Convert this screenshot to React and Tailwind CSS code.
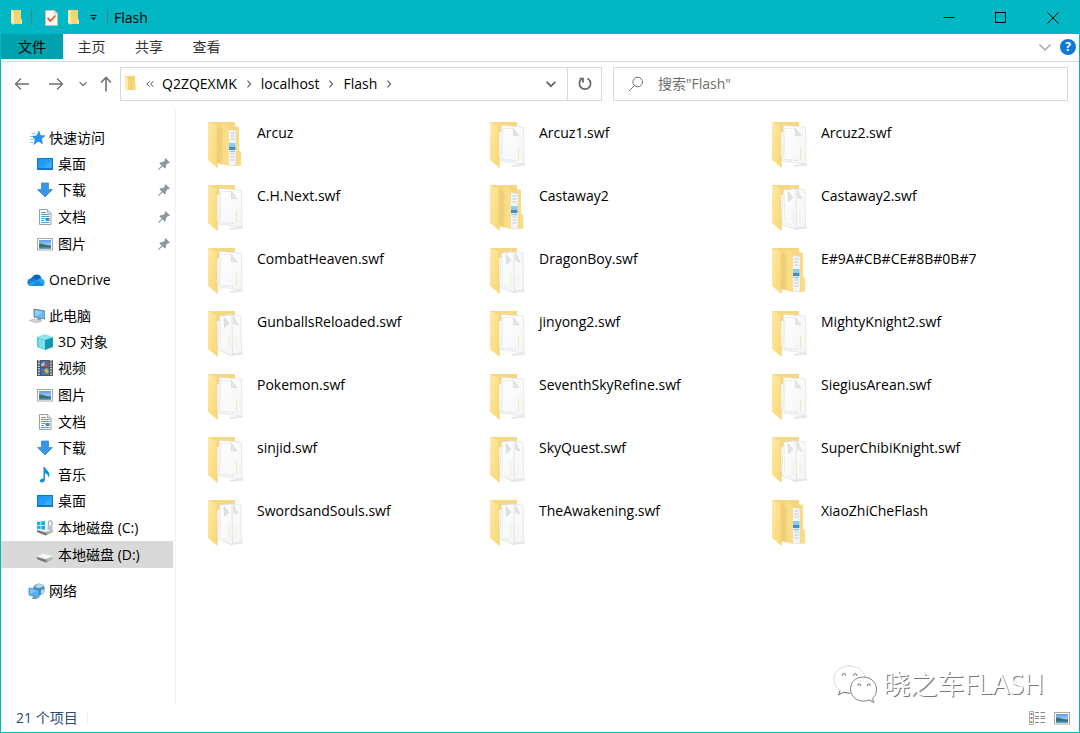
import React from "react";

const SPREADS = {
  folders: ["Arcuz", "Castaway2", "E#9A#CB#CE#8B#0B#7", "XiaoZhiCheFlash"],
  double: [
    "Castaway2.swf",
    "DragonBoy.swf",
    "GunballsReloaded.swf",
    "SkyQuest.swf",
    "SuperChibiKnight.swf",
    "SwordsandSouls.swf",
    "TheAwakening.swf",
  ],
};

const FILES = [
  "Arcuz", "Arcuz1.swf", "Arcuz2.swf",
  "C.H.Next.swf", "Castaway2", "Castaway2.swf",
  "CombatHeaven.swf", "DragonBoy.swf", "E#9A#CB#CE#8B#0B#7",
  "GunballsReloaded.swf", "jinyong2.swf", "MightyKnight2.swf",
  "Pokemon.swf", "SeventhSkyRefine.swf", "SiegiusArean.swf",
  "sinjid.swf", "SkyQuest.swf", "SuperChibiKnight.swf",
  "SwordsandSouls.swf", "TheAwakening.swf", "XiaoZhiCheFlash",
];

function kindOf(name) {
  if (SPREADS.folders.includes(name)) return "folder";
  if (SPREADS.double.includes(name)) return "double";
  return "single";
}

function Gradients() {
  return (
    <svg width="0" height="0" className="absolute" aria-hidden="true">
      <defs>
        <linearGradient id="flap" x1="0" y1="0" x2="1" y2="1">
          <stop offset="0" stopColor="#ffe9a6" />
          <stop offset="1" stopColor="#f9d772" />
        </linearGradient>
        <linearGradient id="flapDark" x1="0" y1="0" x2="1" y2="0">
          <stop offset="0" stopColor="#f0d079" />
          <stop offset="0.5" stopColor="#f9dc86" />
          <stop offset="1" stopColor="#fbdf8b" />
        </linearGradient>
        <linearGradient id="paper" x1="0" y1="0" x2="1" y2="1">
          <stop offset="0" stopColor="#ffffff" />
          <stop offset="1" stopColor="#f4f5f7" />
        </linearGradient>
        <linearGradient id="screen" x1="0" y1="0" x2="1" y2="1">
          <stop offset="0" stopColor="#1494ef" />
          <stop offset="1" stopColor="#33a9fb" />
        </linearGradient>
        <linearGradient id="sky" x1="0" y1="0" x2="0" y2="1">
          <stop offset="0" stopColor="#5b9bea" />
          <stop offset="1" stopColor="#d5ebfb" />
        </linearGradient>
        <linearGradient id="metal" x1="0" y1="0" x2="0" y2="1">
          <stop offset="0" stopColor="#eeeeee" />
          <stop offset="1" stopColor="#8c8c8c" />
        </linearGradient>
      </defs>
    </svg>
  );
}

function BigFolder({ kind }) {
  return (
    <svg width="38" height="48" viewBox="0 0 38 48" className="shrink-0" aria-hidden="true">
      {kind === "folder" ? (
        <>
          <path d="M1 2h27v4l4 1v24l2 1.500v13H24L1 10z" fill="#f6d77f" />
          <path d="M21 9.500l8 1v35.500l-8-1z" fill="#f4f6f8" stroke="#d5d9dd" strokeWidth="0.500" />
          <path d="M23.500 13h4M23.500 16h4M23.500 19h4M23.500 34h4M23.500 37h4M23.500 40h4" stroke="#b9c3cc" strokeWidth="0.900" />
          <path d="M22 23h6.500v3H22z" fill="#8ecbf2" />
          <path d="M22 26.500h6.500v3.500H22z" fill="#3f8fc9" />
          <path d="M22.500 31.500h5.500" stroke="#9cc7e0" strokeWidth="1.500" />
          <path d="M29.500 7l2.500.5V31l2.200 1.500V45l-4.700 1z" fill="#fbdc83" />
          <path d="M10.500 6.500L17 3l5 5.500V46L10 43z" fill="url(#flapDark)" />
          <path d="M10.500 7l5 2v35.500L10 43z" fill="#e7c771" opacity="0.450" />
        </>
      ) : (
        <>
          <path d="M1 2h27v10H10L1 5z" fill="#f6d882" />
          <path d="M22 45l14-1.500v2L24 47z" fill="#dddddd" opacity="0.700" />
          {kind === "double" ? (
            <>
              <path d="M20 5.500l14 1.500.5 37-14.500 1z" fill="url(#paper)" stroke="#dfe1e3" strokeWidth="0.700" />
              <path d="M26.500 7l4.500 9-4.500-1.500z" fill="#e4e6e4" stroke="#cfd1cf" strokeWidth="0.500" />
              <path d="M29 28v12" stroke="#f6ecc6" strokeWidth="0.900" />
              <path d="M12.500 7l12.500-1 .5 40.500L10.500 41z" fill="url(#paper)" stroke="#d9dbdd" strokeWidth="0.700" />
              <path d="M17 8.500l5 6-4.500 4z" fill="#e1e3e2" stroke="#c9ccca" strokeWidth="0.500" />
              <path d="M13.500 10v28M12 39.500l9 2.500" stroke="#dcdee0" strokeWidth="0.600" strokeDasharray="2 0.800" />
              <path d="M22 26v14" stroke="#f6ecc6" strokeWidth="0.900" />
            </>
          ) : (
            <>
              <path d="M12.500 5.500l22 1.500.5 37-23.500-3z" fill="url(#paper)" stroke="#dfe1e3" strokeWidth="0.700" />
              <path d="M14 8.500h11M14 8.500L12.800 38" stroke="#d8dadd" strokeWidth="0.600" strokeDasharray="2 0.600" fill="none" />
              <path d="M13 39.500l14 1" stroke="#d3d5d8" strokeWidth="0.800" strokeDasharray="2 1" />
              <path d="M24.500 8.500l5.500 7.500-5.500-.5z" fill="#e4e6e4" stroke="#c9ccca" strokeWidth="0.500" />
              <path d="M29.500 27v13" stroke="#f6e7ae" strokeWidth="0.900" />
            </>
          )}
        </>
      )}
      <path d="M1 2l9 4v29.500l-.8.700L10.200 37v10.500L1 40z" fill="url(#flap)" />
      <path d="M10 35.500l.3 12" stroke="#eecb6b" strokeWidth="0.700" />
      <path d="M10 6v29.500" stroke="#f0d17a" strokeWidth="0.600" />
    </svg>
  );
}

function MiniFolder() {
  return (
    <svg width="13" height="16" viewBox="0 0 13 16" className="shrink-0" aria-hidden="true">
      <path d="M1 0h10v9l1 .5V14H3z" fill="#f7d372" />
      <path d="M1 0l3 1.500V15L1 13z" fill="#ffe9a8" />
      <path d="M10 10h2v4h-2z" fill="#fbe2a0" />
    </svg>
  );
}

function Picture() {
  return (
    <>
      <rect x="0.500" y="2.500" width="15" height="11.500" fill="#fff" stroke="#a9a9a9" />
      <rect x="2" y="4" width="12" height="8.500" fill="url(#sky)" />
      <path d="M2 7.500c3-.5 5 1.500 12 2v3H2z" fill="#3b7269" />
      <path d="M2 11h12v1.500H2z" fill="#3f84bc" />
    </>
  );
}

function Drive() {
  return (
    <>
      <path d="M0 9.500L5.500 7 16 9v3l-7 3.500L0 12z" fill="url(#metal)" />
      <path d="M0 9.500L5.500 7 16 9l-7 3z" fill="#f6f6f6" />
      <path d="M0 10l9 3v2.500L0 12z" fill="#777" />
      <path d="M10.500 13.400l3-1.200" stroke="#8de27e" strokeWidth="1" />
    </>
  );
}

const GLYPHS = {
  star: (
    <>
      <path d="M9 1l1.500 4.600 4.500.1-3.400 3.100.9 5-4.200-2.500L3.800 14.500l1.400-5L2 6.300l4.700-.5z" fill="#2394ea" stroke="#1583d4" strokeWidth="0.500" />
      <path d="M1.500 3.500h4M0 6.500h3M0 9.500h4M0 12.500h3" stroke="#79c1f5" strokeWidth="0.900" />
    </>
  ),
  desktop: (
    <>
      <rect x="0.500" y="2.500" width="15" height="11" fill="url(#screen)" stroke="#0b7bd2" />
      <path d="M1 12.500h14" stroke="#1675bd" />
      <path d="M6 12L14 5v7z" fill="#5abaff" opacity="0.400" />
    </>
  ),
  download: <path d="M4.500 1h7v6.500h4L8 15 .5 7.500h4z" fill="#3995e6" stroke="#2c82d2" strokeWidth="0.700" />,
  document: (
    <>
      <path d="M2.500.5h8l3.500 3.500v11.500H2.500z" fill="#fff" stroke="#9aa0a5" />
      <path d="M10.500.5V4H14" fill="#e6e9eb" stroke="#9aa0a5" strokeWidth="0.800" />
      <path d="M4 3.500h5M4 5.500h8.500M4 7.500h8.500M4 9.500h4M4 11.500h3M4 13.500h8.500" stroke="#4ba5df" strokeWidth="1" />
      <path d="M8.500 9h4v3h-4z" fill="#5e83a0" />
    </>
  ),
  picture: <Picture />,
  cube: (
    <>
      <path d="M8 0l8 3-8 3-8-3z" fill="#8be6ec" />
      <path d="M0 3l8 3v10l-8-3z" fill="#4bcad7" />
      <path d="M16 3L8 6v10l8-3z" fill="#129aae" />
      <path d="M1.500 4.500L8 7v8l-6.500-2.500z" fill="#a8edf2" opacity="0.600" />
    </>
  ),
  video: (
    <>
      <path d="M0 0h16v16H0z" fill="#53575b" />
      <path d="M4 1h8v6H4zM4 8h8v7H4z" fill="#4073bb" />
      <path d="M4 4l3-2 2 4H4z" fill="#9cc2e7" />
      <path d="M7 5l4-2 1 3-4 1z" fill="#c14a2d" />
      <path d="M7 10l3-2 2 4-3 2z" fill="#d4b23c" />
      <path d="M2 0v16M14 0v16" stroke="#dfe3e5" strokeWidth="1.600" strokeDasharray="1.500 1.200" />
    </>
  ),
  music: <path d="M6.500 0H8c.5 3 4.500 4 4.500 7.500 0 1.500-.7 2.800-1.200 3.500.5-2.500-.8-4-3.300-4.800v6.300c0 1.800-1.500 3-3.200 3S2.500 14.500 3 13.200c.5-1.400 2-2 3.500-1.700z" fill="#1491e5" />,
  systemDrive: (
    <>
      <Drive />
      <path d="M0 2l3.500-.5V5H0zM4.200 1.400L8 1v4H4.200zM0 5.700h3.500v3.400L0 8.700zM4.200 5.700H8v4l-3.800-.5z" fill="#16afed" />
      <path d="M11.500 6V2.700c0-2.400 3.500-2.400 3.500 0V6" fill="none" stroke="#9ba8b3" strokeWidth="1.200" />
      <path d="M10.500 5.500h5V10h-5z" fill="#b7c5d0" />
    </>
  ),
  drive: <Drive />,
};

const ROOT_GLYPHS = {
  cloud: (
    <>
      <path d="M5 5.500C7 1.500 13 1.500 14.500 6L12 9 3 7z" fill="#0b64bf" />
      <path d="M4 14C-1 13.500-1 7 4 6.500c3-1 5 .5 7 2.500z" fill="#1780d6" />
      <path d="M10.500 8c3-3.500 7.500-.5 7 2 .5 2.500-1 4-3 4H4c-2 0-3-1-3-2z" fill="#2ba4ec" />
      <path d="M10 8.500l7 4.500c-.7.700-1.500 1-2.500 1H4z" fill="#168ae0" />
    </>
  ),
  computer: (
    <>
      <path d="M5 1l11 2v8L5 9z" fill="#6ebbf1" stroke="#546c7c" strokeWidth="0.800" />
      <path d="M6 2.200l8 1.500-8 4.500z" fill="#a3d8fb" opacity="0.700" />
      <path d="M9 10l3 .6v2l-4-.8z" fill="#889299" />
      <path d="M0 12.500l5-1.500 8 2-5 2z" fill="#d0d5d8" stroke="#a7adb1" strokeWidth="0.500" />
    </>
  ),
  network: (
    <>
      <circle cx="10" cy="6.500" r="6" fill="#4d94bd" />
      <path d="M6 3c3-3 7-2 8.500 0-2 2-6 3-8.500 0zM12 7c2-1 3.500-1 4-.5 0 3-2 5-4 5.500z" fill="#b4d8e7" />
      <path d="M0 5l10 2v7.500L0 12z" fill="#57b2f2" stroke="#3e7faf" strokeWidth="0.700" />
      <path d="M1 6l7 1.500L1 11z" fill="#96d5ff" opacity="0.600" />
      <path d="M4 13l4 1v2H3z" fill="#7d97a6" />
    </>
  ),
};

function Glyph({ name }) {
  return (
    <svg width="16" height="16" viewBox="0 0 16 16" className="shrink-0" aria-hidden="true">
      {GLYPHS[name]}
    </svg>
  );
}

function Pin() {
  return (
    <svg width="12" height="12" viewBox="0 0 12 12" className="ml-auto" aria-hidden="true">
      <path d="M7.500 0L12 4.500l-1.200.8-.8-.2L8 7.200l-.2 2.600L6.500 10.500 4.500 8.300.8 12 0 11.200l3.700-3.700L1.500 5.500l.8-1.300 2.700-.1L7 2.200l-.2-1z" fill="#8e979e" />
    </svg>
  );
}

function Item({ icon, label, pinned, selected }) {
  return (
    <a href="#" aria-current={selected ? "true" : undefined} className={`flex items-center gap-[5px] pl-9 pr-[3px] ${selected ? "bg-[#d9d9d9]" : ""}`}>
      <Glyph name={icon} />
      <span>{label}</span>
      {pinned && <Pin />}
    </a>
  );
}

function Root({ icon, label }) {
  return (
    <a href="#" className="flex h-[27px] items-center gap-1 pl-[26px]">
      <svg width="18" height="16" viewBox="0 0 18 16" className="shrink-0" aria-hidden="true">
        {icon === "star" ? <g transform="translate(3 0)">{GLYPHS.star}</g> : icon === "cloud" ? ROOT_GLYPHS.cloud : <g transform="translate(2 0)">{ROOT_GLYPHS[icon]}</g>}
      </svg>
      <span>{label}</span>
    </a>
  );
}

function Sidebar() {
  return (
    <nav aria-label="导航窗格" className="flex w-[175px] shrink-0 flex-col gap-[9px] border-r border-[#f3f3f3] pt-4 pr-[2px]">
      <div className="grid h-[133px] grid-rows-5">
        <Root icon="star" label="快速访问" />
        <Item icon="desktop" label="桌面" pinned />
        <Item icon="download" label="下载" pinned />
        <Item icon="document" label="文档" pinned />
        <Item icon="picture" label="图片" pinned />
      </div>
      <Root icon="cloud" label="OneDrive" />
      <div className="grid h-[266px] grid-rows-10">
        <Root icon="computer" label="此电脑" />
        <Item icon="cube" label="3D 对象" />
        <Item icon="video" label="视频" />
        <Item icon="picture" label="图片" />
        <Item icon="document" label="文档" />
        <Item icon="download" label="下载" />
        <Item icon="music" label="音乐" />
        <Item icon="desktop" label="桌面" />
        <Item icon="systemDrive" label="本地磁盘 (C:)" />
        <Item icon="drive" label="本地磁盘 (D:)" selected />
      </div>
      <Root icon="network" label="网络" />
    </nav>
  );
}

function Line({ d, size = 16, width = 1, className = "" }) {
  return (
    <svg width={size} height={size} viewBox="0 0 16 16" fill="none" stroke="currentColor" strokeWidth={width} className={`shrink-0 ${className}`} aria-hidden="true">
      <path d={d} />
    </svg>
  );
}

function TitleBar() {
  return (
    <header className="flex h-[33px] shrink-0 items-center bg-[#00b7c3] pl-[9px] text-black">
      <MiniFolder />
      <span className="ml-2 h-[15px] w-px bg-[#4e8085]" />
      <button aria-label="属性" className="ml-[13px]">
        <svg width="13" height="16" viewBox="0 0 13 16" className="block" aria-hidden="true">
          <path d="M.5.5h9l3 3v12H.5z" fill="#f9f8f8" stroke="#c5bcb9" />
          <path d="M9.500.5v3h3" fill="#ddd" stroke="#b8b8b8" strokeWidth="0.600" />
          <path d="M2.500 8L5.500 11 10.500 5.500" fill="none" stroke="#ed5a2c" strokeWidth="1.800" />
        </svg>
      </button>
      <button aria-label="新建文件夹" className="ml-[9px]"><MiniFolder /></button>
      <button aria-label="自定义快速访问工具栏" className="ml-[9px]">
        <svg width="9" height="9" viewBox="0 0 9 9" className="block" aria-hidden="true"><path d="M1.500 2.500h6" stroke="#000" /><path d="M2 4.500h5L4.500 7z" fill="#000" /></svg>
      </button>
      <span className="ml-[9px] h-[15px] w-px bg-[#4e8085]" />
      <h1 className="ml-[6px] text-sm">Flash</h1>
      <div className="ml-auto flex">
        <button aria-label="最小化" className="flex h-8 w-13 items-center justify-center"><Line d="M2.500 7.500h11" /></button>
        <button aria-label="最大化" className="flex h-8 w-13 items-center justify-center"><Line d="M2.500 2.500h10v10h-10z" /></button>
        <button aria-label="关闭" className="flex h-8 w-13 items-center justify-center"><Line d="M2.500 2.500l11 11M13.500 2.500l-11 11" /></button>
      </div>
    </header>
  );
}

function Ribbon() {
  return (
    <div className="flex h-7 shrink-0 items-start border-b border-[#dadbdc] text-[#333]">
      <button className="h-[25px] w-[62px] bg-[#00a3ad] text-black">文件</button>
      <button className="h-[25px] w-[57px]">主页</button>
      <button className="h-[25px] w-[58px]">共享</button>
      <button className="h-[25px] w-[57px]">查看</button>
      <button aria-label="展开功能区" className="mt-[5px] ml-auto text-[#a0a0a0]"><Line d="M2.500 5.500L8 11l5.500-5.500" width={1.3} /></button>
      <button aria-label="帮助" className="mt-[5px] mr-[3px] ml-[7px] size-4 rounded-full bg-[#0f78d4] text-xs leading-4 font-bold text-white">?</button>
    </div>
  );
}

function AddressRow() {
  const arrow = "M6 3.500l4 4.500-4 4.500";
  return (
    <div className="flex h-[46px] shrink-0 items-start pt-[5px] pr-[11px] text-[#707070]">
      <div className="flex h-[34px] w-[119px] items-center pl-[13px]">
        <button aria-label="后退"><Line d="M15 8H1.500M7 2.500L1.500 8 7 13.500" width={1.4} /></button>
        <button aria-label="前进" className="ml-[18px]"><Line d="M1 8h13.500M9 2.500L14.500 8 9 13.500" width={1.4} /></button>
        <button aria-label="最近浏览的位置" className="ml-[14px]"><Line d="M2.500 5L8 10.500 13.500 5" size={10} width={2} /></button>
        <button aria-label="上移" className="ml-[10px]"><Line d="M8 15.500V1.500M3 6.500l5-5 5 5" width={1.6} /></button>
      </div>
      <div className="flex h-[34px] min-w-0 flex-[477_1_0%] items-center border border-[#d9d9d9] pl-[3px] text-black">
        <MiniFolder />
        <Line d="M7.500 3.500L3 8l4.500 4.500M13.500 3.500L9 8l4.500 4.500" size={10} width={1.6} className="ml-[8px] text-[#555]" />
        <a href="#" className="ml-[7px]">Q2ZQEXMK</a>
        <Line d={arrow} size={12} width={1.7} className="ml-[6px] text-[#666]" />
        <a href="#" className="ml-[6px]">localhost</a>
        <Line d={arrow} size={12} width={1.7} className="ml-[6px] text-[#666]" />
        <a href="#" className="ml-[6px]">Flash</a>
        <Line d={arrow} size={12} width={1.7} className="ml-[6px] text-[#666]" />
        <button aria-label="以前的位置" className="mr-[9px] ml-auto text-[#666]"><Line d="M3 5.500L8 10.500l5-5" size={14} width={2} /></button>
        <button aria-label="刷新" className="flex h-full w-[34px] items-center justify-center border-l border-[#d9d9d9] text-[#666]">
          <Line d="M4.500 3.200A5.600 5.600 0 1 0 11.500 3.200M2.500 2.500h3.500v4M11.500 3.200l-1-.7" width={1.7} />
        </button>
      </div>
      <div className="ml-[11px] flex h-[34px] min-w-0 flex-[439_1_0%] items-center border border-[#d9d9d9] pl-[14px]">
        <Line d="M6.300 9.700L1 15M14.500 6a4.800 4.800 0 1 1-9.600 0 4.800 4.800 0 0 1 9.600 0z" />
        <input type="text" aria-label="搜索" placeholder={'搜索"Flash"'} className="ml-[14px] min-w-0 flex-1 bg-transparent outline-none placeholder:text-[#6d6d6d]" />
      </div>
    </div>
  );
}

function Watermark() {
  return (
    <div className="absolute right-[35px] bottom-0 flex items-center gap-[5px] text-white">
      <svg width="46" height="40" viewBox="0 0 46 40" aria-hidden="true">
        <g fill="#fff" strokeWidth="1">
          <path d="M17.500 2C8 2 2 8 2 15.500c0 4.500 2 8 6 11L6.500 31l5-2.800c2 .8 4 1.100 6.500 1.100 9 0 15.500-6 15.500-13.500S26.500 2 17.500 2z" stroke="#c9c9c9" strokeDasharray="1.500 0.700" />
          <path d="M8 26.500L6.500 31l5-2.800 6.500 1.100" fill="none" stroke="#777" />
          <path d="M31.500 13C23 13 18.500 18.500 18.500 25s5 12 13 12c2 0 4-.4 5.500-1l5 2.500-1.500-4c2.700-2.300 4-5 4-9 0-7-5.500-12.500-13-12.500z" stroke="#808080" />
          <path d="M10.300 11.800c-.8-3 3.700-3 3 0M21.800 11.800c-.8-3 3.700-3 3 0M26 21.800c-.7-2.500 3.200-2.500 2.500 0M35.500 21.800c-.7-2.500 3.200-2.500 2.500 0" fill="none" stroke="#666" />
        </g>
      </svg>
      <span className="text-[27px] leading-9 text-shadow-[1px_1px_0px_#777]">晓之车FLASH</span>
    </div>
  );
}

export default function App() {
  return (
    <div className="flex min-h-screen flex-col border border-[#00b7c3] bg-white font-['Open_Sans','Noto_Sans_CJK_SC',sans-serif] text-[14px] leading-5 text-black">
      <Gradients />
      <TitleBar />
      <Ribbon />
      <AddressRow />
      <div className="relative flex flex-1">
        <Sidebar />
        <main className="min-w-0 flex-1 pt-[12px] pr-[26px] pl-[31px]">
          <ul className="grid auto-rows-[63px] grid-cols-3">
            {FILES.map((name) => (
              <li key={name} className="flex min-w-0 items-start gap-3">
                <BigFolder kind={kindOf(name)} />
                <span className="pt-[3px]">{name}</span>
              </li>
            ))}
          </ul>
        </main>
        <Watermark />
      </div>
      <footer className="flex h-7 shrink-0 items-center pr-[9px] pl-[15px] text-[#2b4a78]">
        <span>21 个项目</span>
        <span className="ml-[9px] h-3 w-px bg-[#eeeeee]" />
        <button aria-label="详细信息" className="ml-auto">
          <svg width="16" height="16" viewBox="0 0 16 16" className="block" aria-hidden="true">
            <path d="M.5 1.500h4v13h-4z" fill="#fff" stroke="#aaa" />
            <path d="M1.500 3h2v2h-2z" fill="#568ac0" /><path d="M1.500 7h2v2h-2z" fill="#d7593b" /><path d="M1.500 11h2v2h-2z" fill="#6f9c46" />
            <path d="M6 2.500h4M11.500 2.500H16M6 6.500h4M11.500 6.500H16M6 8.500h4M11.500 8.500H16M6 12.500h4M11.500 12.500H16" stroke="#888" />
          </svg>
        </button>
        <button aria-label="大缩略图" className="ml-[9px]">
          <svg width="16" height="16" viewBox="0 0 16 16" className="block" aria-hidden="true"><Picture /></svg>
        </button>
      </footer>
    </div>
  );
}
